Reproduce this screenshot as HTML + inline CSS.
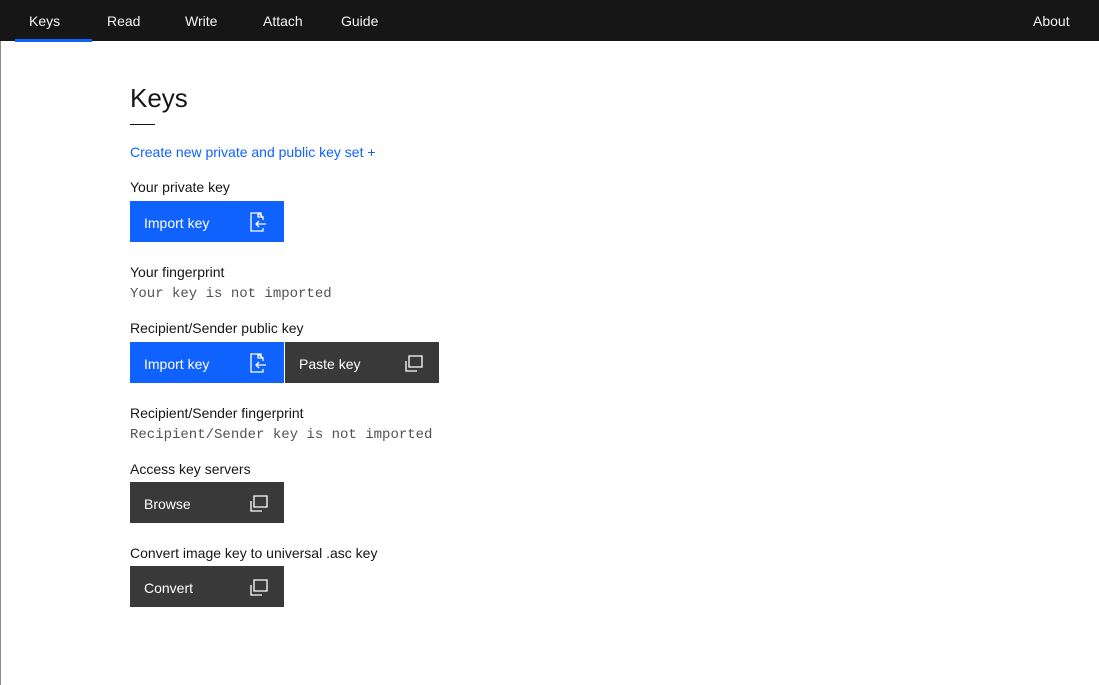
<!DOCTYPE html>
<html><head><meta charset="utf-8"><style>
*{margin:0;padding:0;box-sizing:border-box}
body{width:1099px;height:685px;background:#fff;font-family:"Liberation Sans",sans-serif;color:#161616;position:relative;overflow:hidden}
.edge{position:absolute;left:0;top:0;width:1px;height:685px;background:#8d8d8d}
.nav{position:absolute;left:0;top:0;width:1099px;height:41px;background:#161616}
.nav a{position:absolute;top:0;height:41px;line-height:42px;color:#f4f4f4;font-size:14px;text-decoration:none}
.ul{position:absolute;left:15px;top:39px;width:77px;height:3px;background:#0f62fe}
.a{position:absolute;left:130px}
.lbl{font-size:14px}
.mono{font-family:"Liberation Mono",monospace;font-size:14px;color:#525252}
.btn{position:absolute;width:154px;height:41px;color:#fff;font-size:14px;line-height:45px;padding-left:14px}
.blue{background:#0f62fe}.dark{background:#393939}
.btn svg{position:absolute;right:16px;top:11px}
</style></head><body>
<div class="edge"></div>
<div class="nav">
<a style="left:29px">Keys</a><a style="left:107px">Read</a><a style="left:185px">Write</a><a style="left:263px">Attach</a><a style="left:341px">Guide</a><a style="left:1033px">About</a>
<div class="ul"></div></div>
<div class="a" style="top:83px;font-size:26px;font-weight:300">Keys</div>
<div class="a" style="top:124px;width:25px;height:1px;background:#161616"></div>
<div class="a lbl" style="top:144px;color:#0f62fe">Create new private and public key set +</div>
<div class="a lbl" style="top:179px">Your private key</div>
<div class="btn blue" style="left:130px;top:201px">Import key<svg width="20" height="20" viewBox="0 0 20 20" fill="none" stroke="#fff" stroke-width="1.3"><path d="M13 4V1H3v18h12v-3M10 1v4h5V8M10 1l5 4M18 12H8m3-3-3 3 3 3"/></svg></div>
<div class="a lbl" style="top:264px">Your fingerprint</div>
<div class="a mono" style="top:286px">Your key is not imported</div>
<div class="a lbl" style="top:320px">Recipient/Sender public key</div>
<div class="btn blue" style="left:130px;top:342px">Import key<svg width="20" height="20" viewBox="0 0 20 20" fill="none" stroke="#fff" stroke-width="1.3"><path d="M13 4V1H3v18h12v-3M10 1v4h5V8M10 1l5 4M18 12H8m3-3-3 3 3 3"/></svg></div>
<div class="btn dark" style="left:285px;top:342px">Paste key<svg width="20" height="20" viewBox="0 0 20 20" fill="none" stroke="#fff" stroke-width="1.3"><path d="M6 3h13v11H6zM3 8v10h11"/></svg></div>
<div class="a lbl" style="top:405px">Recipient/Sender fingerprint</div>
<div class="a mono" style="top:427px">Recipient/Sender key is not imported</div>
<div class="a lbl" style="top:461px">Access key servers</div>
<div class="btn dark" style="left:130px;top:482px">Browse<svg width="20" height="20" viewBox="0 0 20 20" fill="none" stroke="#fff" stroke-width="1.3"><path d="M6 3h13v11H6zM3 8v10h11"/></svg></div>
<div class="a lbl" style="top:545px">Convert image key to universal .asc key</div>
<div class="btn dark" style="left:130px;top:566px">Convert<svg width="20" height="20" viewBox="0 0 20 20" fill="none" stroke="#fff" stroke-width="1.3"><path d="M6 3h13v11H6zM3 8v10h11"/></svg></div>
</body></html>
